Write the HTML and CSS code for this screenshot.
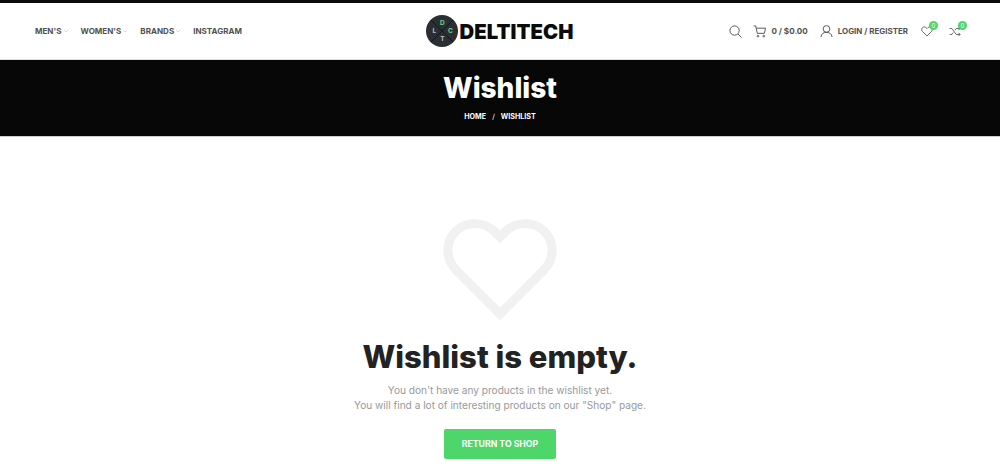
FILE: index.html
```html
<!DOCTYPE html>
<html lang="en">
<head>
<meta charset="utf-8">
<title>Wishlist – Deltitech</title>
<link rel="stylesheet" href="styles.css">
</head>
<body>
<div class="topline"></div>
<header class="header">
  <nav class="nav">
    <a class="nav-item">MEN'S<svg class="caret" viewBox="0 0 6 4"><path d="M1 1l2 2 2-2"/></svg></a>
    <a class="nav-item">WOMEN'S<svg class="caret" viewBox="0 0 6 4"><path d="M1 1l2 2 2-2"/></svg></a>
    <a class="nav-item">BRANDS<svg class="caret" viewBox="0 0 6 4"><path d="M1 1l2 2 2-2"/></svg></a>
    <a class="nav-item">INSTAGRAM</a>
  </nav>
  <a class="logo">
    <span class="logo-mark">
      <svg class="logo-cross" viewBox="0 0 32 32"><path d="M5 5l22 22M27 5L5 27"/></svg>
      <span class="lm lm-d">D</span><span class="lm lm-l">L</span><span class="lm lm-c">C</span><span class="lm lm-t">T</span>
    </span>
    <span class="logo-text">DELTITECH</span>
  </a>
  <div class="tools">
    <svg class="icon icon-search" viewBox="0 0 14 14"><circle cx="6" cy="6" r="5"/><path d="M9.700 9.700L13.500 13.500"/></svg>
    <div class="cart">
      <svg class="icon icon-cart" viewBox="0 0 15 14"><path d="M.7 1h2.200l1.700 8h7.600l1.300-5.600H3.500"/><circle cx="5.300" cy="12" r=".9"/><circle cx="11.600" cy="12" r=".9"/></svg>
      <span class="tool-text">0 / $0.00</span>
    </div>
    <div class="login">
      <svg class="icon icon-user" viewBox="0 0 14 14"><circle cx="7" cy="4.800" r="3.600"/><path d="M1 13.500c.4-3.400 2.800-5.100 6-5.100s5.600 1.700 6 5.100"/></svg>
      <span class="tool-text tool-small">LOGIN / REGISTER</span>
    </div>
    <div class="badged">
      <svg class="icon icon-heart" viewBox="0 0 14 13"><path d="M7 11.800L1.700 6.500C.4 5.200.4 3.200 1.600 2 2.900.8 4.800.8 6 2l1 1 1-1c1.200-1.200 3.100-1.200 4.400 0 1.200 1.200 1.200 3.200-.1 4.500z"/></svg>
      <span class="badge">0</span>
    </div>
    <div class="badged">
      <svg class="icon icon-compare" viewBox="0 0 15 13"><path d="M.5 3h2.800l5 7h4.500M.5 10h2.800l1.500-2.200M7 5l1.300-2h4.500M11 1l2 2-2 2M11 8l2 2-2 2"/></svg>
      <span class="badge">0</span>
    </div>
  </div>
</header>
<section class="title-bar">
  <h1 class="title">Wishlist</h1>
  <div class="crumbs"><a>HOME</a><span class="sep">/</span><span>WISHLIST</span></div>
</section>
<main class="empty">
  <svg class="big-heart" viewBox="0 0 114 104"><path d="M57 96L14 53C2 41 2 24 13 13c11-10 28-10 39 1l5 5 5-5c11-11 28-11 39-1 11 11 11 28-1 40z"/></svg>
  <h2 class="empty-title">Wishlist is empty.</h2>
  <p class="empty-text">You don't have any products in the wishlist yet.<br>You will find a lot of interesting products on our "Shop" page.</p>
  <a class="btn">RETURN TO SHOP</a>
</main>
</body>
</html>
```
FILE: styles.css
```css
* { box-sizing: border-box; }
html, body { margin: 0; height: 472px; overflow: hidden; }
body { font-family: Inter, "Open Sans", sans-serif; background: #fff; color: #333; }
.topline { height: 3px; background: #0a0a0a; }
.header { height: 57px; padding: 0 38px 0 35px; display: grid; grid-template-columns: 1fr auto 1fr; align-items: center; border-bottom: 1px solid #ddd; }
.nav { display: flex; gap: 12px; font-size: 8px; font-weight: 700; color: #505050; letter-spacing: .03px; }
.nav-item { display: flex; align-items: center; gap: 1px; }
.caret { width: 6px; height: 4px; fill: none; stroke: #ccc; stroke-width: .7; }
.logo { display: flex; align-items: center; justify-self: center; margin-left: 3px; }
.logo-mark { position: relative; width: 32px; height: 32px; border-radius: 50%; background: #2b2f33; display: block; }
.logo-cross { position: absolute; inset: 0; fill: none; stroke: #11181b; stroke-width: 1; }
.lm { position: absolute; font-size: 6.500px; font-weight: 700; line-height: 8px; width: 8px; text-align: center; }
.lm-d { left: 12px; top: 4px; color: #6fd08a; }
.lm-l { left: 4px; top: 12px; color: #bbb; }
.lm-c { left: 20px; top: 12px; color: #6fd08a; }
.lm-t { left: 12px; top: 20px; color: #bbb; }
.logo-text { font-size: 20.300px; font-weight: 900; color: #0b0b0b; letter-spacing: .1px; margin-left: 1px; }
.tools { display: flex; align-items: center; justify-content: flex-end; color: #505050; }
.icon { fill: none; stroke: #505050; stroke-width: 1; display: block; }
.icon-search { width: 13px; height: 13px; margin-right: 11px; }
.cart { display: flex; align-items: center; gap: 4px; margin-right: 12px; }
.icon-cart { width: 14px; height: 13px; }
.login { display: flex; align-items: center; gap: 5px; margin-right: 13px; }
.icon-user { width: 13px; height: 14px; }
.tool-text { font-size: 8.100px; font-weight: 700; white-space: nowrap; }
.tool-small { font-size: 7.950px; }
.badged { position: relative; }
.badged + .badged { margin-left: 16px; }
.icon-heart { width: 12px; height: 11px; }
.icon-compare { width: 13px; height: 11px; }
.badge { position: absolute; right: -5px; top: -5px; width: 9px; height: 9px; border-radius: 50%; background: #4fd66a; color: #fff; font-size: 6px; line-height: 9px; text-align: center; }
.title-bar { height: 77px; background: #070707; color: #fff; text-align: center; border-bottom: 1px solid #ccc; padding-top: 11px; }
.title { margin: 0; font-size: 28px; font-weight: 800; line-height: 34px; }
.crumbs { margin-top: 7px; font-size: 7.200px; font-weight: 700; line-height: 10px; display: flex; justify-content: center; gap: 6px; }
.sep { font-weight: 400; }
.empty { display: flex; flex-direction: column; align-items: center; }
.big-heart { width: 114px; height: 104px; margin-top: 81px; fill: none; stroke: #f1f1f1; stroke-width: 9; filter: blur(.6px); }
.empty-title { margin: 15px 0 0; font-size: 31px; line-height: 40px; font-weight: 800; color: #222; }
.empty-text { margin: 6px 0 0; font-size: 10.100px; line-height: 15px; color: #999; text-align: center; }
.btn { margin-top: 16px; width: 112px; height: 30px; border-radius: 2px; background: #4ed66b; color: #fff; font-size: 8.700px; font-weight: 700; display: flex; align-items: center; justify-content: center; }
```
